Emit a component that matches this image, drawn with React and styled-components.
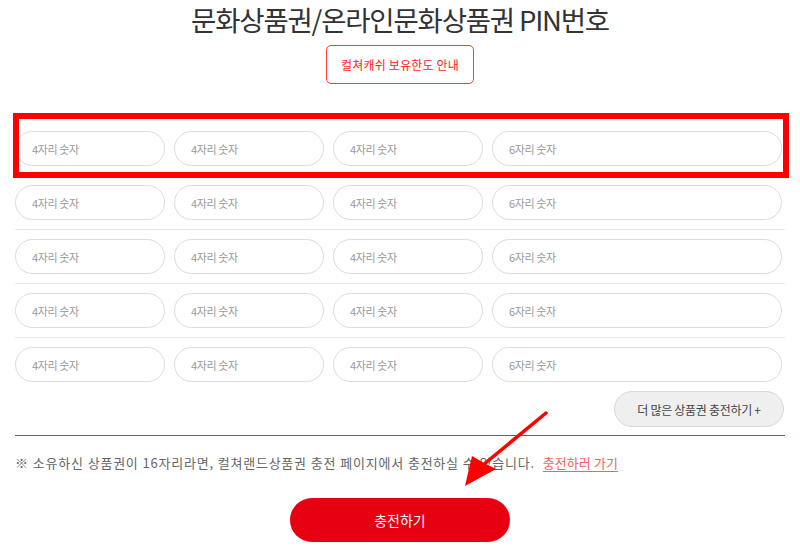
import React from "react";
import styled, { createGlobalStyle } from "styled-components";

const GlobalStyle = createGlobalStyle`
  body {
    margin: 0;
    background: #fff;
    font-family: "Noto Sans CJK KR", "Noto Sans", sans-serif;
    color: #333;
  }
  * { box-sizing: border-box; }
`;

const rows = [0, 1, 2, 3, 4];
const fields = ["4자리 숫자", "4자리 숫자", "4자리 숫자", "6자리 숫자"];

const App = () => {
  return (
    <>
      <GlobalStyle />
      <Wrap>
        <Title>문화상품권/온라인문화상품권 PIN번호</Title>
        <NoticeRow>
          <NoticeButton>컬쳐캐쉬 보유한도 안내</NoticeButton>
        </NoticeRow>

        <PinList>
          {rows.map((r) => (
            <PinRow key={r} last={r === rows.length - 1}>
              {fields.map((f, i) => (
                <PinInput key={i} placeholder={f} />
              ))}
              {r === 0 && <Highlight />}
            </PinRow>
          ))}
        </PinList>

        <MoreRow>
          <MoreButton>더 많은 상품권 충전하기 +</MoreButton>
        </MoreRow>
        <Divider />

        <Info>
          ※ 소유하신 상품권이 16자리라면, 컬쳐랜드상품권 충전 페이지에서 충전하실 수 있습니다.
          <InfoLink href="#">충전하러 가기</InfoLink>
        </Info>

        <SubmitRow>
          <SubmitButton>충전하기</SubmitButton>
        </SubmitRow>

        <Arrow width="110" height="100" viewBox="0 0 110 100">
          <line x1="96" y1="13" x2="33" y2="65" stroke="#ff0000" strokeWidth="3.5" strokeLinecap="round" />
          <polygon points="15,86 22,56 34,63 46,69" fill="#ff0000" />
        </Arrow>
      </Wrap>
    </>
  );
};

export default App;

const Wrap = styled.div`
  position: relative;
  width: 770px;
  margin: 0 auto;
`;

const Title = styled.h2`
  margin: 0;
  font-size: 27.5px;
  line-height: 38px;
  font-weight: 400;
  text-align: center;
  color: #333;
  letter-spacing: -1.2px;
`;

const NoticeRow = styled.div`
  display: flex;
  justify-content: center;
  margin-top: 7px;
`;

const NoticeButton = styled.button`
  height: 39px;
  width: 148px;
  padding: 0;
  background: #fff;
  border: 1px solid #ff3b3b;
  border-radius: 5px;
  color: #ff1a1a;
  font-family: inherit;
  font-size: 12px;
  letter-spacing: 0.2px;
  cursor: pointer;
`;

const PinList = styled.div`
  margin-top: 38px;
`;

const PinRow = styled.div`
  position: relative;
  display: grid;
  grid-template-columns: 150px 150px 150px 290px;
  column-gap: 9px;
  padding: 9px 0;
  border-bottom: ${(p) => (p.last ? "none" : "1px solid #e8e8e8")};
`;

const PinInput = styled.input`
  height: 35px;
  border: 1px solid #dcdcdc;
  border-radius: 18px;
  padding: 0 0 0 16px;
  font-family: inherit;
  font-size: 11px;
  letter-spacing: -0.4px;
  color: #333;
  outline: none;
  background: #fff;

  &::placeholder {
    color: #999;
  }
`;

const Highlight = styled.div`
  position: absolute;
  top: -9px;
  left: -2px;
  right: -4px;
  bottom: -3px;
  border: 6px solid #ff0000;
  pointer-events: none;
`;

const MoreRow = styled.div`
  display: flex;
  justify-content: flex-end;
  padding-right: 1px;
  padding-bottom: 8px;
`;

const Divider = styled.div`
  height: 1px;
  background: #f5203f;
`;

const MoreButton = styled.button`
  height: 36px;
  width: 170px;
  padding: 0;
  background: #efefef;
  border: 1px solid #d8d8d8;
  border-radius: 18px;
  color: #444;
  font-family: inherit;
  font-size: 12px;
  letter-spacing: -0.3px;
  cursor: pointer;
`;

const Info = styled.p`
  margin: 0;
  padding-top: 17px;
  font-size: 13px;
  line-height: 20px;
  color: #666;
  letter-spacing: 0.75px;
  word-spacing: 0.4px;
`;

const InfoLink = styled.a`
  margin-left: 8px;
  color: #f2625e;
  letter-spacing: 0;
  text-decoration: underline;
  text-underline-offset: 3px;
`;

const SubmitRow = styled.div`
  display: flex;
  justify-content: center;
  margin-top: 25px;
`;

const SubmitButton = styled.button`
  width: 220px;
  height: 44px;
  border: none;
  border-radius: 22px;
  background: #e60012;
  color: #fff;
  font-family: inherit;
  font-size: 14px;
  cursor: pointer;
`;

const Arrow = styled.svg`
  position: absolute;
  left: 435px;
  top: 400px;
  pointer-events: none;
`;
